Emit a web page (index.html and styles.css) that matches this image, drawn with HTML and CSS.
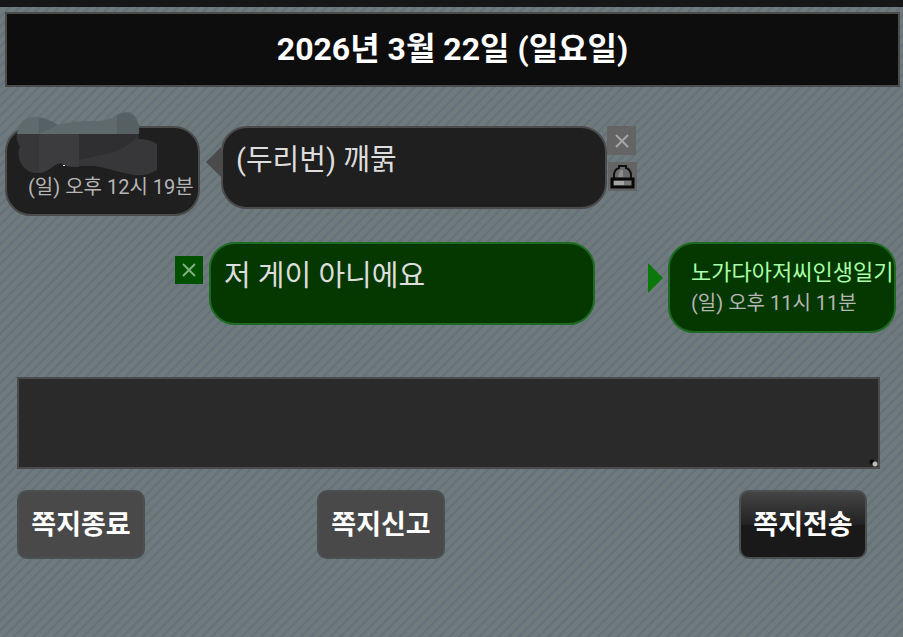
FILE: index.html
```html
<!DOCTYPE html>
<html lang="ko">
<head>
    <meta charset="UTF-8">
    <meta name="viewport" content="width=device-width, initial-scale=1.0">
    <title>쪽지</title>
    <link rel="stylesheet" href="styles.css">
</head>
<body>
    <header class="date-bar">
        <h1>2026년 3월 22일 (일요일)</h1>
    </header>

    <main>
        <!-- Received message -->
        <div class="message received">
            <div class="user">
                <span class="name"></span>
                <span class="time">(일) 오후 12시 19분</span>
                <svg class="smudge" width="142" height="64" viewBox="0 0 142 64" aria-hidden="true">
                    <path fill="#373739" d="M1 22C0 27 2 31 4 35C-1 46 7 60 19 61C32 62 37 52 45 51Q50 55 56 55Q68 53 80 54Q92 57 104 60Q121 65 133 62L141 58V32Q134 27 122 27Q123 24 122 22Z"/>
                    <path fill="#3c3c3e" d="M23 22V61C33 60 37 52 45 51Q50 55 63 55V22Z"/>
                    <path fill="#2f2f31" d="M63 22H122Q121 27 110 34Q101 41 84 43L63 48Z"/>
                    <path fill="#5f6a6d" d="M1 22Q3 6 18 5Q30 4 42 13Q56 9 75 9Q91 10 99 4Q106-1 113 0Q124 4 123 22Z"/>
                    <path fill="#566165" d="M23 6Q32 7 42 13Q32 17 23 22Z"/>
                    <path fill="#566063" d="M101 3Q112-2 119 5Q124 12 123 22H101Z"/>
                    <path fill="#fff" d="M47 53h2v1h-2z"/>
                </svg>
            </div>
            <span class="arrow"></span>
            <p class="bubble">(두리번) 깨묽</p>
            <div class="tools">
                <button type="button" class="delete" aria-label="삭제">
                    <svg width="16" height="16" viewBox="0 0 16 16"><path d="M2 2L14 14M14 2L2 14"/></svg>
                </button>
                <button type="button" class="report" aria-label="신고">
                    <svg width="29" height="29" viewBox="0 0 29 29">
                        <path fill="#6a6a6a" stroke="#111" stroke-width="2" d="M6 17V12Q7 7 11 6V4H18V6Q22 7 23 12V17Z"/>
                        <path fill="#8d8d8d" d="M12 8H15V15H10Z"/>
                        <path fill="#777" stroke="#080808" stroke-width="3" d="M4 17H25V25H4Z"/>
                        <path fill="#a5a5a5" d="M6 19H16V23H6Z"/>
                    </svg>
                </button>
            </div>
        </div>

        <!-- Sent message -->
        <div class="message sent">
            <button type="button" class="delete" aria-label="삭제">
                <svg width="16" height="16" viewBox="0 0 16 16"><path d="M2 2L14 14M14 2L2 14"/></svg>
            </button>
            <p class="bubble">저 게이 아니에요</p>
            <span class="arrow"></span>
            <div class="user">
                <span class="name">노가다아저씨인생일기</span>
                <span class="time">(일) 오후 11시 11분</span>
            </div>
        </div>

        <form class="reply">
            <textarea aria-label="쪽지 내용"></textarea>
            <div class="buttons">
                <button type="button">쪽지종료</button>
                <button type="button">쪽지신고</button>
                <button type="submit" class="send">쪽지전송</button>
            </div>
        </form>
    </main>
</body>
</html>
```
FILE: styles.css
```css
* {
    box-sizing: border-box;
}

body {
    margin: 0;
    min-height: 100vh;
    padding: 5px 3px 0 5px;
    border-top: 7px solid #161616;
    background: #6c777a repeating-linear-gradient(135deg, #6f7a7c 0, #6f7a7c 3px, #63707a 5px, #6f7a7c 7px);
    font-family: Roboto, "Noto Sans CJK KR", sans-serif;
    color: #ddd;
}

button {
    padding: 0;
    border: none;
    font-family: inherit;
    cursor: pointer;
}

.date-bar {
    padding: 16px;
    border: 2px solid #4b4b4b;
    background: #0d0d0d;
}

.date-bar h1 {
    margin: 0;
    font-size: 32px;
    line-height: 39px;
    text-align: center;
    color: #fff;
}

.message {
    display: flex;
    align-items: flex-start;
}

.received {
    margin-top: 39px;
}

.sent {
    justify-content: flex-end;
    margin: 26px 4px 0 0;
}

.user {
    position: relative;
    display: flex;
    flex-direction: column;
    width: 195px;
    height: 90px;
    padding: 13px 0 0 21px;
    border: 2px solid #4b4b4b;
    border-radius: 26px;
    background: #1f1f1f;
    font-size: 20px;
    line-height: 31px;
    white-space: nowrap;
}

.user .name {
    height: 31px;
    font-size: 22px;
}

.user .time {
    color: #b5b5b5;
}

.smudge {
    position: absolute;
    top: -16px;
    left: 9px;
}

.bubble {
    flex: 0 1 386px;
    min-height: 83px;
    margin: 0;
    padding: 12px 13px;
    border: 2px solid #4b4b4b;
    border-radius: 26px;
    background: #1f1f1f;
    font-size: 29px;
    line-height: 40px;
}

.arrow {
    margin-top: 21px;
    border: 15px solid transparent;
    border-width: 15px 0;
}

.received .arrow {
    margin-left: 6px;
    border-right: 15px solid #4b4b4b;
}

.sent .arrow {
    margin-right: 5px;
    margin-left: 53px;
    border-left: 15px solid #0b780b;
}

.sent .user {
    width: 228px;
    height: 91px;
}

.sent .user,
.sent .bubble {
    border-color: #1c6b20;
    background: #053800;
}

.sent .name {
    color: #a9ffa9;
}

.tools {
    display: flex;
    flex-direction: column;
    gap: 7px;
}

.delete,
.report {
    display: flex;
    align-items: center;
    justify-content: center;
    width: 29px;
    height: 29px;
    background: #646464;
}

.delete path {
    fill: none;
    stroke: #a5a5a5;
    stroke-width: 2;
}

.report {
    margin-left: 1px;
}

.sent .delete {
    width: 28px;
    height: 28px;
    margin: 14px 6px 0 0;
    background: #005000;
}

.sent .delete path {
    stroke: #80b080;
}

.reply {
    margin: 44px 20px 0 12px;
}

.reply textarea {
    display: block;
    width: 100%;
    height: 92px;
    border: 2px solid #4b4b4b;
    background: #2a2a2a;
    color: #ddd;
    font-size: 28px;
    resize: vertical;
}

/* small grip in the corner */
.reply textarea::-webkit-resizer {
    background: radial-gradient(circle at 12px 12px, #bbb 2px, transparent 3px), radial-gradient(circle at 9px 10px, #080808 2px, transparent 3px);
}

.buttons {
    display: flex;
    gap: 172px;
    margin: 21px 13px 0 0;
}

.buttons button {
    width: 128px;
    height: 69px;
    padding-bottom: 4px;
    border: 2px solid #4b4f50;
    border-radius: 10px;
    background: #494949;
    color: #fff;
    font-size: 27px;
    font-weight: bold;
    white-space: nowrap;
}

.buttons .send {
    margin-left: auto;
    background: linear-gradient(#444, #222 50%, #191919 51%, #191919);
}
```
